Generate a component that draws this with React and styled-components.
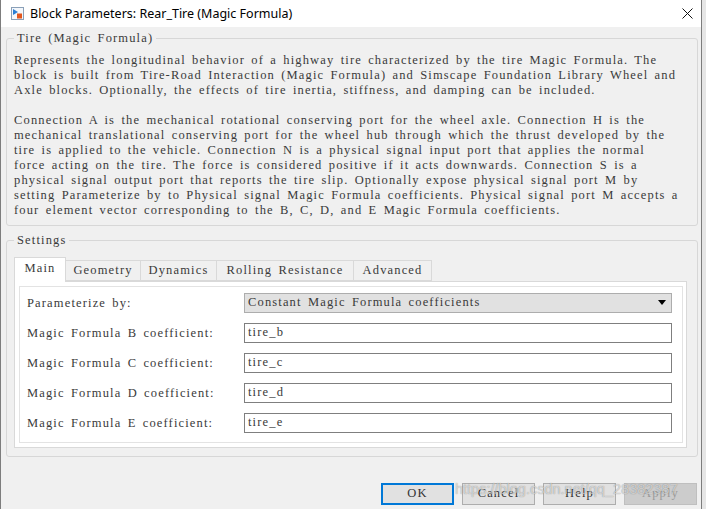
import React from "react";
import styled, {createGlobalStyle} from "styled-components";

const GlobalStyle = createGlobalStyle`
  html, body {
    margin: 0;
    padding: 0;
    width: 706px;
    height: 509px;
    overflow: hidden;
    background: #e6e6e6;
  }
`;

// SimSun-like look: serif glyphs spread to a near fixed pitch
const UI_FONT = `"Liberation Serif", "DejaVu Serif", serif`;

const Window = styled.div`
  position: relative;
  width: 702px;
  height: 509px;
  box-sizing: border-box;
  border-left: 1px solid #7d7d7d;
  border-right: 1px solid #7d7d7d;
  background: #f0f0f0;
  display: flex;
  flex-direction: column;
  overflow: hidden;
  font-family: ${UI_FONT};
  font-size: 12.5px;
  letter-spacing: 1.15px;
  word-spacing: 2px;
  color: #3a3a3a;
`;

const TitleBar = styled.div`
  height: 27px;
  flex-shrink: 0;
  background: #fff;
  display: flex;
  align-items: center;
  padding-left: 10px;
  padding-right: 8px;
  letter-spacing: 0;
  word-spacing: 0;
`;

const Title = styled.span`
  margin-left: 6px;
  font-family: "Noto Sans", "Noto Sans CJK SC", sans-serif;
  font-size: 12.5px;
  color: #000;
`;

const Close = styled.div`
  margin-left: auto;
  display: flex;
`;

const Body = styled.div`
  padding: 4px 3px 0 5px;
  display: flex;
  flex-direction: column;
`;

const Group = styled.fieldset`
  margin: ${p => p.$top || 0}px 0 0 0;
  padding: ${p => p.$pad};
  border: 1px solid #d7d7d7;
  border-radius: 3px;
  min-width: 0;
`;

const Legend = styled.legend`
  padding: 0 3px;
  line-height: 15px;
`;

const Para = styled.p`
  margin: ${p => (p.$gap ? "15px" : "0")} 0 0 0;
  line-height: 15px;
  white-space: pre;
`;

const TabStrip = styled.div`
  display: flex;
  align-items: flex-end;
  height: 24px;
`;

const Tab = styled.div`
  box-sizing: border-box;
  width: ${p => p.$w}px;
  height: ${p => (p.$active ? 25 : 21)}px;
  margin-bottom: ${p => (p.$active ? -1 : 0)}px;
  margin-left: ${p => (p.$first ? 0 : -1)}px;
  padding-bottom: ${p => (p.$active ? 2 : 0)}px;
  display: flex;
  align-items: center;
  justify-content: center;
  white-space: pre;
  border: 1px solid #d9d9d9;
  border-bottom: ${p => (p.$active ? "none" : "1px solid #d9d9d9")};
  background: ${p => (p.$active ? "#fff" : "#f0f0f0")};
  position: relative;
  z-index: ${p => (p.$active ? 1 : 0)};
`;

const Panel = styled.div`
  background: #fff;
  border: 1px solid #d9d9d9;
  padding: 4px 3px 4px 4px;
`;

const Inner = styled.div`
  border: 1px solid #e3e3e3;
  padding: 6px 10px 9px 7px;
  display: grid;
  grid-template-columns: 217px 1fr;
  row-gap: 10px;
  align-items: center;
`;

const Label = styled.div`
  line-height: 20px;
  white-space: pre;
`;

const Select = styled.div`
  box-sizing: border-box;
  height: 20px;
  background: #e1e1e1;
  border: 1px solid #adadad;
  display: flex;
  align-items: center;
  padding: 0 4px 0 3px;
  white-space: pre;
`;

const Arrow = styled.span`
  margin-left: auto;
  margin-right: 1px;
  width: 0;
  height: 0;
  border-left: 4px solid transparent;
  border-right: 4px solid transparent;
  border-top: 5px solid #000;
`;

const Field = styled.div`
  box-sizing: border-box;
  height: 20px;
  background: #fff;
  border: 1px solid #7f7f7f;
  display: flex;
  align-items: center;
  padding: 0 3px;
`;

const ButtonRow = styled.div`
  margin-top: 26px;
  padding-right: 1px;
  display: flex;
  justify-content: flex-end;
  gap: 8px;
`;

const Button = styled.div`
  box-sizing: border-box;
  width: 73px;
  height: 22px;
  display: flex;
  align-items: center;
  justify-content: center;
  background: ${p => (p.$disabled ? "#cccccc" : "#e1e1e1")};
  border: ${p => (p.$default ? "2px solid #0078d7" : p.$disabled ? "1px solid #bfbfbf" : "1px solid #adadad")};
  color: ${p => (p.$disabled ? "#9a9a9a" : "#333")};
`;

const Watermark = styled.div`
  position: absolute;
  left: 454px;
  top: 481px;
  font-family: "Liberation Sans", Arial, sans-serif;
  font-size: 14.5px;
  letter-spacing: 0;
  word-spacing: 0;
  color: rgba(255, 255, 255, 0.6);
  text-shadow: 0 0 1px rgba(0, 0, 0, 0.45);
  pointer-events: none;
`;

const BlockIcon = () => (
    <svg width="13" height="13" viewBox="0 0 13 13">
        <rect x="0.5" y="0.5" width="12" height="12" fill="#f4f7fb" stroke="#8aa0b8"/>
        <path d="M2 2 L7 5 L2 8 Z" fill="#2a7fd4"/>
        <rect x="6" y="6.5" width="5" height="5" fill="#e2571e"/>
    </svg>
);

const CloseIcon = () => (
    <svg width="11" height="11" viewBox="0 0 11 11">
        <path d="M0.5 0.5 L10.5 10.5 M10.5 0.5 L0.5 10.5" stroke="#111" strokeWidth="1"/>
    </svg>
);

const para1 = [
    "Represents the longitudinal behavior of a highway tire characterized by the tire Magic Formula. The",
    "block is built from Tire-Road Interaction (Magic Formula) and Simscape Foundation Library Wheel and",
    "Axle blocks. Optionally, the effects of tire inertia, stiffness, and damping can be included.",
];

const para2 = [
    "Connection A is the mechanical rotational conserving port for the wheel axle. Connection H is the",
    "mechanical translational conserving port for the wheel hub through which the thrust developed by the",
    "tire is applied to the vehicle. Connection N is a physical signal input port that applies the normal",
    "force acting on the tire. The force is considered positive if it acts downwards. Connection S is a",
    "physical signal output port that reports the tire slip. Optionally expose physical signal port M by",
    "setting Parameterize by to Physical signal Magic Formula coefficients. Physical signal port M accepts a",
    "four element vector corresponding to the B, C, D, and E Magic Formula coefficients.",
];

const tabs = [
    {name: "Main", w: 52},
    {name: "Geometry", w: 76},
    {name: "Dynamics", w: 77},
    {name: "Rolling Resistance", w: 138},
    {name: "Advanced", w: 79},
];

const coefficients = [
    {label: "Magic Formula B coefficient:", value: "tire_b"},
    {label: "Magic Formula C coefficient:", value: "tire_c"},
    {label: "Magic Formula D coefficient:", value: "tire_d"},
    {label: "Magic Formula E coefficient:", value: "tire_e"},
];

export default function App() {
    return (
        <>
            <GlobalStyle/>
            <Window>
                <TitleBar>
                    <BlockIcon/>
                    <Title>Block Parameters: Rear_Tire (Magic Formula)</Title>
                    <Close><CloseIcon/></Close>
                </TitleBar>
                <Body>
                    <Group $pad="7px 7px 7px 7px">
                        <Legend>Tire (Magic Formula)</Legend>
                        <Para>{para1.join("\n")}</Para>
                        <Para $gap>{para2.join("\n")}</Para>
                    </Group>

                    <Group $top={7} $pad="8.5px 10px 8px 7px">
                        <Legend>Settings</Legend>
                        <TabStrip>
                            {tabs.map((t, i) => (
                                <Tab key={t.name} $w={t.w} $active={i === 0} $first={i === 0}>{t.name}</Tab>
                            ))}
                        </TabStrip>
                        <Panel>
                            <Inner>
                                <Label>Parameterize by:</Label>
                                <Select>
                                    Constant Magic Formula coefficients
                                    <Arrow/>
                                </Select>
                                {coefficients.map(c => (
                                    <React.Fragment key={c.value}>
                                        <Label>{c.label}</Label>
                                        <Field>{c.value}</Field>
                                    </React.Fragment>
                                ))}
                            </Inner>
                        </Panel>
                    </Group>

                    <ButtonRow>
                        <Button $default>OK</Button>
                        <Button>Cancel</Button>
                        <Button>Help</Button>
                        <Button $disabled>Apply</Button>
                    </ButtonRow>
                </Body>
                <Watermark>https://blog.csdn.net/qq_28382387</Watermark>
            </Window>
        </>
    );
}
